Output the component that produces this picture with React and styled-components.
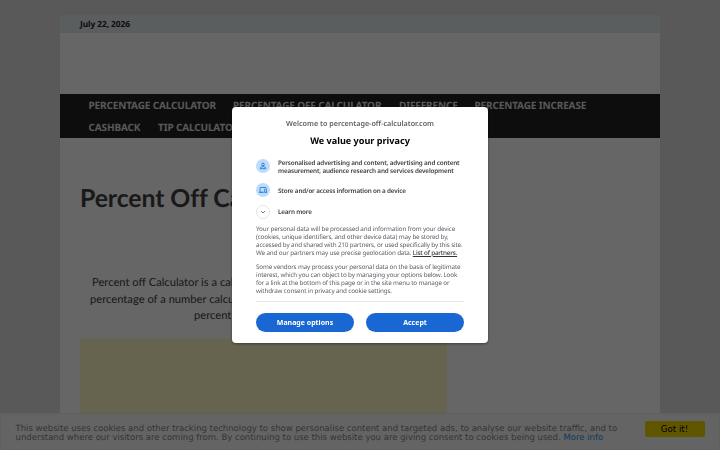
import React from "react";
import styled, { createGlobalStyle } from "styled-components";

const GlobalStyle = createGlobalStyle`
  * { box-sizing: border-box; }
  html, body { margin: 0; padding: 0; }
  body { background: #dedede; overflow: hidden; height: 450px; }
  h1, h2, p { margin: 0; }
`;

const Page = styled.div`
  width: 600px;
  height: 450px;
  margin: 0 auto;
  padding-top: 15px;
  overflow: hidden;
`;

const Sheet = styled.div`
  background: #fff;
  height: 435px;
`;

const TopBar = styled.div`
  height: 18px;
  padding-left: 20px;
  background: #e3eceb;
  color: #222;
  font: 700 8.4px/19px "Noto Sans", sans-serif;
  letter-spacing: -0.08px;
  text-rendering: geometricPrecision;
`;

const LogoArea = styled.div`
  height: 60.5px;
`;

const Nav = styled.nav`
  height: 44.5px;
  padding: 0 20px;
  background: #222;
  display: flex;
  flex-wrap: wrap;
  align-content: flex-start;
  text-rendering: geometricPrecision;
`;

const NavItem = styled.a`
  width: ${(p) => p.$width}px;
  height: 22.5px;
  padding-left: 8.5px;
  color: #dcdcdc;
  font: 700 10px/22px "Noto Sans", sans-serif;
  letter-spacing: -0.14px;
  white-space: nowrap;
`;

const Article = styled.main`
  padding: 43.5px 20px 0;
  color: #404040;
  font-family: Lato, sans-serif;
  text-rendering: geometricPrecision;
`;

const Title = styled.h1`
  height: 34px;
  font-size: 24.8px;
  line-height: 33px;
  font-weight: 700;
  letter-spacing: -0.07px;
  white-space: nowrap;
`;

const Intro = styled.p`
  margin-top: 59.5px;
  height: 64px;
  font-size: 11.2px;
  line-height: 16.5px;
  white-space: pre;
`;

const IntroLine = styled.span`
  display: block;
  padding-left: ${(p) => p.$indent}px;
`;

const AdSlot = styled.div`
  width: 367px;
  height: 120px;
  background: #fffbc3;
`;

const CookieBar = styled.aside`
  position: fixed;
  left: 0;
  right: 0;
  bottom: 0;
  height: 37px;
  padding: 0 14.5px;
  display: flex;
  background: #fbfbfb;
  border: 1px solid #ededed;
  color: #838391;
  text-rendering: geometricPrecision;
`;

const CookieText = styled.p`
  flex: 1;
  padding-top: 11.4px;
  font: 8.51px/9px "DejaVu Sans", sans-serif;
  white-space: nowrap;
`;

const CookieLink = styled.a`
  color: #2a8fd8;
`;

const CookieButton = styled.button`
  width: 60px;
  height: 16px;
  margin-top: 7px;
  padding: 0;
  border: 0;
  border-radius: 2px;
  background: #f1d600;
  color: #000;
  font: 8.7px/16px "DejaVu Sans", sans-serif;
`;

const Overlay = styled.div`
  position: fixed;
  inset: 0;
  display: flex;
  align-items: center;
  justify-content: center;
  background: rgba(0, 0, 0, 0.6);
`;

const Dialog = styled.section`
  width: 256px;
  height: 236px;
  padding: 0 24px;
  border-radius: 4px;
  background: #fff;
  box-shadow: 0 1px 3px rgba(0, 0, 0, 0.4);
  font-family: "Noto Sans", sans-serif;
  text-rendering: geometricPrecision;
  color: #5f6368;
`;

const Welcome = styled.p`
  padding-top: 12px;
  font-size: 7.2px;
  line-height: 10px;
  font-weight: 600;
  text-align: center;
`;

const Heading = styled.h2`
  margin-top: 5px;
  color: #000;
  font-size: 9.1px;
  line-height: 14px;
  font-weight: 700;
  text-align: center;
`;

const Purpose = styled.div`
  display: flex;
  align-items: center;
  gap: 8px;
  height: ${(p) => p.$height}px;
  margin-top: ${(p) => p.$gap}px;
  color: #3f4246;
  font-size: 6.3px;
  letter-spacing: -0.16px;
  line-height: 8px;
  font-weight: 600;
  white-space: nowrap;
`;

const IconDisc = styled.span`
  flex: none;
  width: 14px;
  height: 14px;
  margin-top: ${(p) => (p.$outlined ? "0" : "-2px")};
  border-radius: 50%;
  background: ${(p) => (p.$outlined ? "#fff" : "#bbdcfb")};
  border: ${(p) => (p.$outlined ? "1px solid #e3e5e8" : "0")};
  display: grid;
  place-items: center;
`;

const Copy = styled.p`
  margin-top: ${(p) => p.$gap}px;
  font-size: 6.3px;
  letter-spacing: -0.15px;
  line-height: 8px;
  white-space: nowrap;
`;

const Partners = styled.a`
  color: #333;
  font-weight: 500;
  letter-spacing: -0.19px;
  text-decoration: underline;
`;

const Actions = styled.div`
  display: flex;
  gap: 12px;
  margin-top: 6px;
  padding-top: 11px;
  border-top: 1px solid #e3e5e7;
`;

const Action = styled.button`
  width: 98px;
  height: 19px;
  padding: 0;
  border: 0;
  border-radius: 10px;
  background: #1967d2;
  color: #fff;
  font: 700 7px/19px "Noto Sans", sans-serif;
`;

const PersonIcon = () => (
  <svg width="8" height="8" viewBox="0 0 24 24" fill="none" stroke="#1967d2" strokeWidth="2.4">
    <circle cx="12" cy="7.5" r="4" />
    <path d="M4 20v-2c0-2.7 5-4 8-4s8 1.3 8 4v2z" />
  </svg>
);

const DevicesIcon = () => (
  <svg width="8" height="8" viewBox="0 0 24 24" fill="#1967d2">
    <path d="M4 6h18V4H4c-1.1 0-2 .9-2 2v11H0v3h14v-3H4V6zm19 2h-6c-.55 0-1 .45-1 1v10c0 .55.45 1 1 1h6c.55 0 1-.45 1-1V9c0-.55-.45-1-1-1zm-1 9h-4v-7h4v7z" />
  </svg>
);

const ChevronIcon = () => (
  <svg width="8" height="8" viewBox="0 0 24 24" fill="none" stroke="#5f6368" strokeWidth="2.5">
    <path d="M6 9l6 6 6-6" />
  </svg>
);

const navItems = [
  { label: "PERCENTAGE CALCULATOR", width: 144.5 },
  { label: "PERCENTAGE OFF CALCULATOR", width: 166 },
  { label: "DIFFERENCE", width: 75.5 },
  { label: "PERCENTAGE INCREASE", width: 129 },
  { label: "CASHBACK", width: 69.5 },
  { label: "TIP CALCULATOR", width: 100 },
];

export default function App() {
  return (
    <>
      <GlobalStyle />
      <Page>
        <Sheet>
          <TopBar>July 22, 2026</TopBar>
          <LogoArea />
          <Nav>
            {navItems.map((item) => (
              <NavItem key={item.label} $width={item.width}>{item.label}</NavItem>
            ))}
          </Nav>
          <Article>
            <Title>Percent Off Calculator</Title>
            <Intro>
              <IntroLine $indent={12}>Percent off Calculator is a calculator</IntroLine>
              <IntroLine $indent={10}>percentage of a number calculator</IntroLine>
              <IntroLine $indent={114}>percent off</IntroLine>
            </Intro>
            <AdSlot />
          </Article>
        </Sheet>
      </Page>
      <CookieBar>
        <CookieText>
          This website uses cookies and other tracking technology to show personalise content and targeted ads, to analyse our website traffic, and to
          <br />
          understand where our visitors are coming from. By continuing to use this website you are giving consent to cookies being used. <CookieLink>More info</CookieLink>
        </CookieText>
        <CookieButton>Got it!</CookieButton>
      </CookieBar>
      <Overlay>
        <Dialog>
          <Welcome>Welcome to percentage-off-calculator.com</Welcome>
          <Heading>We value your privacy</Heading>
          <Purpose $height={16} $gap={11}>
            <IconDisc><PersonIcon /></IconDisc>
            <span>
              Personalised advertising and content, advertising and content
              <br />
              measurement, audience research and services development
            </span>
          </Purpose>
          <Purpose $height={14} $gap={9}>
            <IconDisc><DevicesIcon /></IconDisc>
            <span>Store and/or access information on a device</span>
          </Purpose>
          <Purpose $height={14} $gap={7}>
            <IconDisc $outlined><ChevronIcon /></IconDisc>
            <span>Learn more</span>
          </Purpose>
          <Copy $gap={6}>
            Your personal data will be processed and information from your device
            <br />
            (cookies, unique identifiers, and other device data) may be stored by,
            <br />
            accessed by and shared with 210 partners, or used specifically by this site.
            <br />
            We and our partners may use precise geolocation data. <Partners>List of partners.</Partners>
          </Copy>
          <Copy $gap={6}>
            Some vendors may process your personal data on the basis of legitimate
            <br />
            interest, which you can object to by managing your options below. Look
            <br />
            for a link at the bottom of this page or in the site menu to manage or
            <br />
            withdraw consent in privacy and cookie settings.
          </Copy>
          <Actions>
            <Action>Manage options</Action>
            <Action>Accept</Action>
          </Actions>
        </Dialog>
      </Overlay>
    </>
  );
}
